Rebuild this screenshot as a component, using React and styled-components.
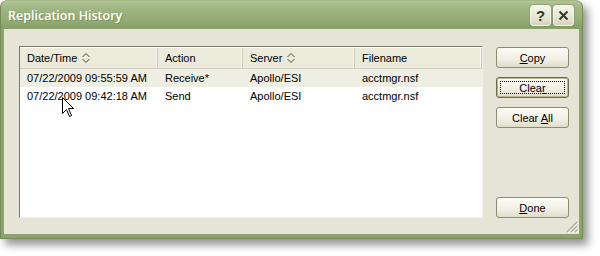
import styled, { createGlobalStyle } from 'styled-components'

const GlobalStyle = createGlobalStyle`
  html, body {
    margin: 0;
    padding: 0;
    background: #ffffff;
  }
  body {
    font-family: Tahoma, "Liberation Sans", Arial, sans-serif;
    font-size: 11px;
    color: #000;
  }
`

const Page = styled.div`
  width: 600px;
  height: 256px;
  position: relative;
  overflow: hidden;
`

const Window = styled.div`
  position: relative;
  width: 583px;
  height: 239px;
  display: flex;
  flex-direction: column;
  background: #8da36f;
  border-radius: 7px 7px 0 0;
  box-shadow: 5px 6px 8px rgba(0, 0, 0, 0.42);
  box-sizing: border-box;
  border: 1px solid #748b58;
  border-top-color: #a4b889;
`

const TitleBar = styled.div`
  height: 28px;
  flex: none;
  display: flex;
  align-items: center;
  justify-content: space-between;
  padding: 0 8px 0 7px;
  border-radius: 6px 6px 0 0;
  background: linear-gradient(#b0c393 0%, #a0b784 25%, #94ab76 70%, #869e67 100%);
`

const Title = styled.span`
  color: #ffffff;
  font-family: "Open Sans", "Liberation Sans", sans-serif;
  font-size: 12.5px;
  font-weight: 600;
  text-shadow: 1px 1px 0 rgba(80, 100, 50, 0.35);
`

const CaptionButtons = styled.div`
  display: flex;
  gap: 2px;
  margin-top: 1px;
`

const CaptionButton = styled.div`
  width: 21px;
  height: 21px;
  box-sizing: border-box;
  border: 1px solid #f4f4ec;
  border-radius: 3px;
  background: linear-gradient(#f7f6ea, #e3e1cd 70%, #d6d3bc);
  box-shadow: 0 0 0 1px rgba(110, 130, 80, 0.35);
  display: flex;
  align-items: center;
  justify-content: center;
  color: #2f3a22;
  font-family: "Liberation Sans", sans-serif;
  font-weight: bold;
  font-size: 15px;
`

const Frame = styled.div`
  flex: 1;
  margin: 0 3px 4px 3px;
  background: #e5e4d6;
  display: flex;
  padding: 17px 10px 16px 15px;
  gap: 13px;
  position: relative;
`

const ListBox = styled.div`
  width: 464px;
  box-sizing: border-box;
  background: #ffffff;
  border: 1px solid #f3f1e6;
  border-top-color: #7a786c;
  border-left-color: #7a786c;
  display: flex;
  flex-direction: column;
  position: relative;
`

const HeaderRow = styled.div`
  display: flex;
  height: 22px;
  background: #ebeadb;
  border-bottom: 1px solid #d2cfbe;
  border-top: 1px solid #ffffff;
  box-sizing: border-box;
`

const HeaderCell = styled.div`
  width: ${({ w }) => w}px;
  box-sizing: border-box;
  padding-left: 7px;
  display: flex;
  align-items: center;
  gap: 5px;
  border-right: 1px solid #cbc8b7;
  box-shadow: inset -1px 0 0 #f8f7ef;
  color: #000;
`

const Row = styled.div`
  display: flex;
  height: 18px;
  align-items: center;
  background: ${({ selected }) => (selected ? '#efeee2' : '#ffffff')};
`

const Cell = styled.div`
  width: ${({ w }) => w}px;
  box-sizing: border-box;
  padding-left: 7px;
  white-space: nowrap;
`

const ButtonColumn = styled.div`
  width: 73px;
  display: flex;
  flex-direction: column;
  gap: 9px;
  padding-top: 1px;
`

const Button = styled.div`
  height: 21px;
  box-sizing: border-box;
  border: 1px solid ${({ focused }) => (focused ? '#6d6b4c' : '#8e8c6e')};
  border-radius: 3px;
  background: linear-gradient(#fdfdf7 0%, #f1efe3 60%, #dfdcc8 100%);
  display: flex;
  align-items: center;
  justify-content: center;
  position: relative;
  margin-top: ${({ bottom }) => (bottom ? 'auto' : '0')};
  box-shadow: ${({ focused }) => (focused ? 'inset 0 0 0 1px #b9b690' : 'none')};

  &::after {
    content: '';
    display: ${({ focused }) => (focused ? 'block' : 'none')};
    position: absolute;
    inset: 3px;
    border: 1px dotted #000;
  }
`

const Key = styled.span`
  text-decoration: underline;
`

const Grip = styled.svg`
  position: absolute;
  right: 1px;
  bottom: 1px;
`

const Cursor = styled.svg`
  position: absolute;
  left: 62px;
  top: 97px;
`

const columns = [
  { label: 'Date/Time', w: 138, sort: true },
  { label: 'Action', w: 85 },
  { label: 'Server', w: 112, sort: true },
  { label: 'Filename', w: 127 },
]

const rows = [
  ['07/22/2009 09:55:59 AM', 'Receive*', 'Apollo/ESI', 'acctmgr.nsf'],
  ['07/22/2009 09:42:18 AM', 'Send', 'Apollo/ESI', 'acctmgr.nsf'],
]

function SortIcon() {
  return (
    <svg width="8" height="10" viewBox="0 0 8 10">
      <path d="M0.5 4 L4 0.5 L7.5 4 M0.5 6 L4 9.5 L7.5 6" fill="none" stroke="#444" strokeWidth="1" />
    </svg>
  )
}

function App() {
  return (
    <Page>
      <GlobalStyle />
      <Window>
        <TitleBar>
          <Title>Replication History</Title>
          <CaptionButtons>
            <CaptionButton>?</CaptionButton>
            <CaptionButton>
              <svg width="11" height="11" viewBox="0 0 11 11">
                <path d="M1.5 1.5 L9.5 9.5 M9.5 1.5 L1.5 9.5" stroke="#2f3a22" strokeWidth="2" />
              </svg>
            </CaptionButton>
          </CaptionButtons>
        </TitleBar>
        <Frame>
          <ListBox>
            <HeaderRow>
              {columns.map((c) => (
                <HeaderCell key={c.label} w={c.w}>
                  {c.label}
                  {c.sort && <SortIcon />}
                </HeaderCell>
              ))}
            </HeaderRow>
            {rows.map((r, i) => (
              <Row key={i} selected={i === 0}>
                {r.map((v, j) => (
                  <Cell key={j} w={columns[j].w}>{v}</Cell>
                ))}
              </Row>
            ))}
          </ListBox>
          <ButtonColumn>
            <Button><span><Key>C</Key>opy</span></Button>
            <Button focused><span>Clea<Key>r</Key></span></Button>
            <Button><span>Clear <Key>A</Key>ll</span></Button>
            <Button bottom><span><Key>D</Key>one</span></Button>
          </ButtonColumn>
          <Grip width="13" height="13" viewBox="0 0 13 13">
            <path d="M12 2 L2 12 M12 6 L6 12 M12 10 L10 12" stroke="#a9a78e" strokeWidth="1.2" />
            <path d="M13 3 L3 13 M13 7 L7 13 M13 11 L11 13" stroke="#ffffff" strokeWidth="1" />
          </Grip>
        </Frame>
      </Window>
      <Cursor width="13" height="21" viewBox="0 0 13 21">
        <path d="M0.5 0.5 L0.5 16.5 L4.5 12.5 L7.5 19.5 L9.5 18.5 L6.5 11.5 L11.5 11.5 Z" fill="#fff" stroke="#000" strokeWidth="1" />
      </Cursor>
    </Page>
  )
}

export default App
